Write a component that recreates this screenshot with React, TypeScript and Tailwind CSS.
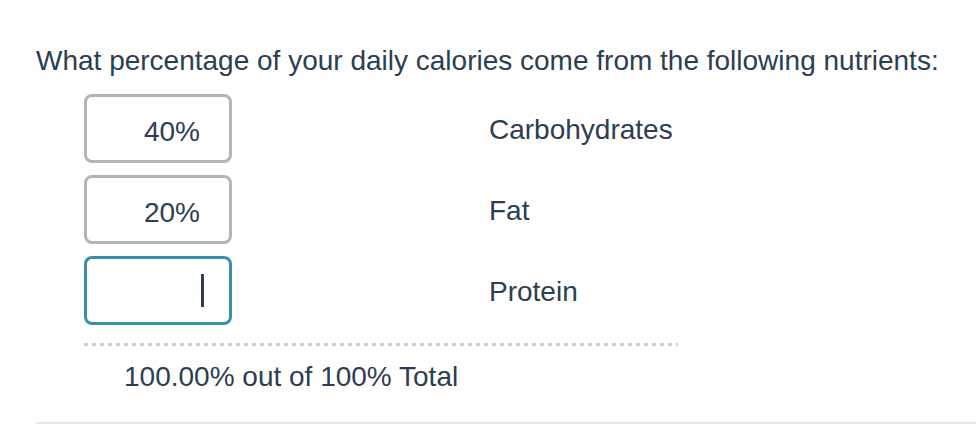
const rows = [
  { value: "40%", label: "Carbohydrates", focused: false },
  { value: "20%", label: "Fat", focused: false },
  { value: "", label: "Protein", focused: true },
];

export default function App() {
  return (
    <div className="w-[976px] h-[424px] bg-white text-[#2c3e50] overflow-hidden" style={{ fontFamily: '"Liberation Sans", Arial, sans-serif' }}>
      <div className="ml-[36px] pt-[41px] border-b-2 border-[#e8e8e8] h-[424px]">
        <h2 className="text-[28px] leading-[40px]">What percentage of your daily calories come from the following nutrients:</h2>
        <div className="ml-[48px] mt-[13px] flex flex-col gap-[12px]">
          {rows.map((row) => (
            <div key={row.label} className="flex items-center">
              <div
                className={
                  "w-[148px] h-[69px] rounded-[8px] border-[3px] flex items-center justify-end pr-[28px] text-[28px] " +
                  (row.focused ? "border-[#3a8fa8]" : "border-[#b0b5bc]")
                }
              >
                {row.value && <span className="mt-[6px] mr-[1px]">{row.value}</span>}
                {row.focused && <span className="w-[3px] h-[33px] mr-[-3px] bg-[#2c3e50]" />}
              </div>
              <span className="ml-[257px] text-[28px] leading-[40px] pt-[3px]">{row.label}</span>
            </div>
          ))}
          <div className="w-[594px] h-[3px] mt-[6px] bg-[repeating-linear-gradient(to_right,#d0d0d0_0,#d0d0d0_4px,transparent_4px,transparent_8px)]" />
        </div>
        <p className="ml-[88px] mt-[11px] text-[28px] leading-[40px]">100.00% out of 100% Total</p>
      </div>
    </div>
  );
}
